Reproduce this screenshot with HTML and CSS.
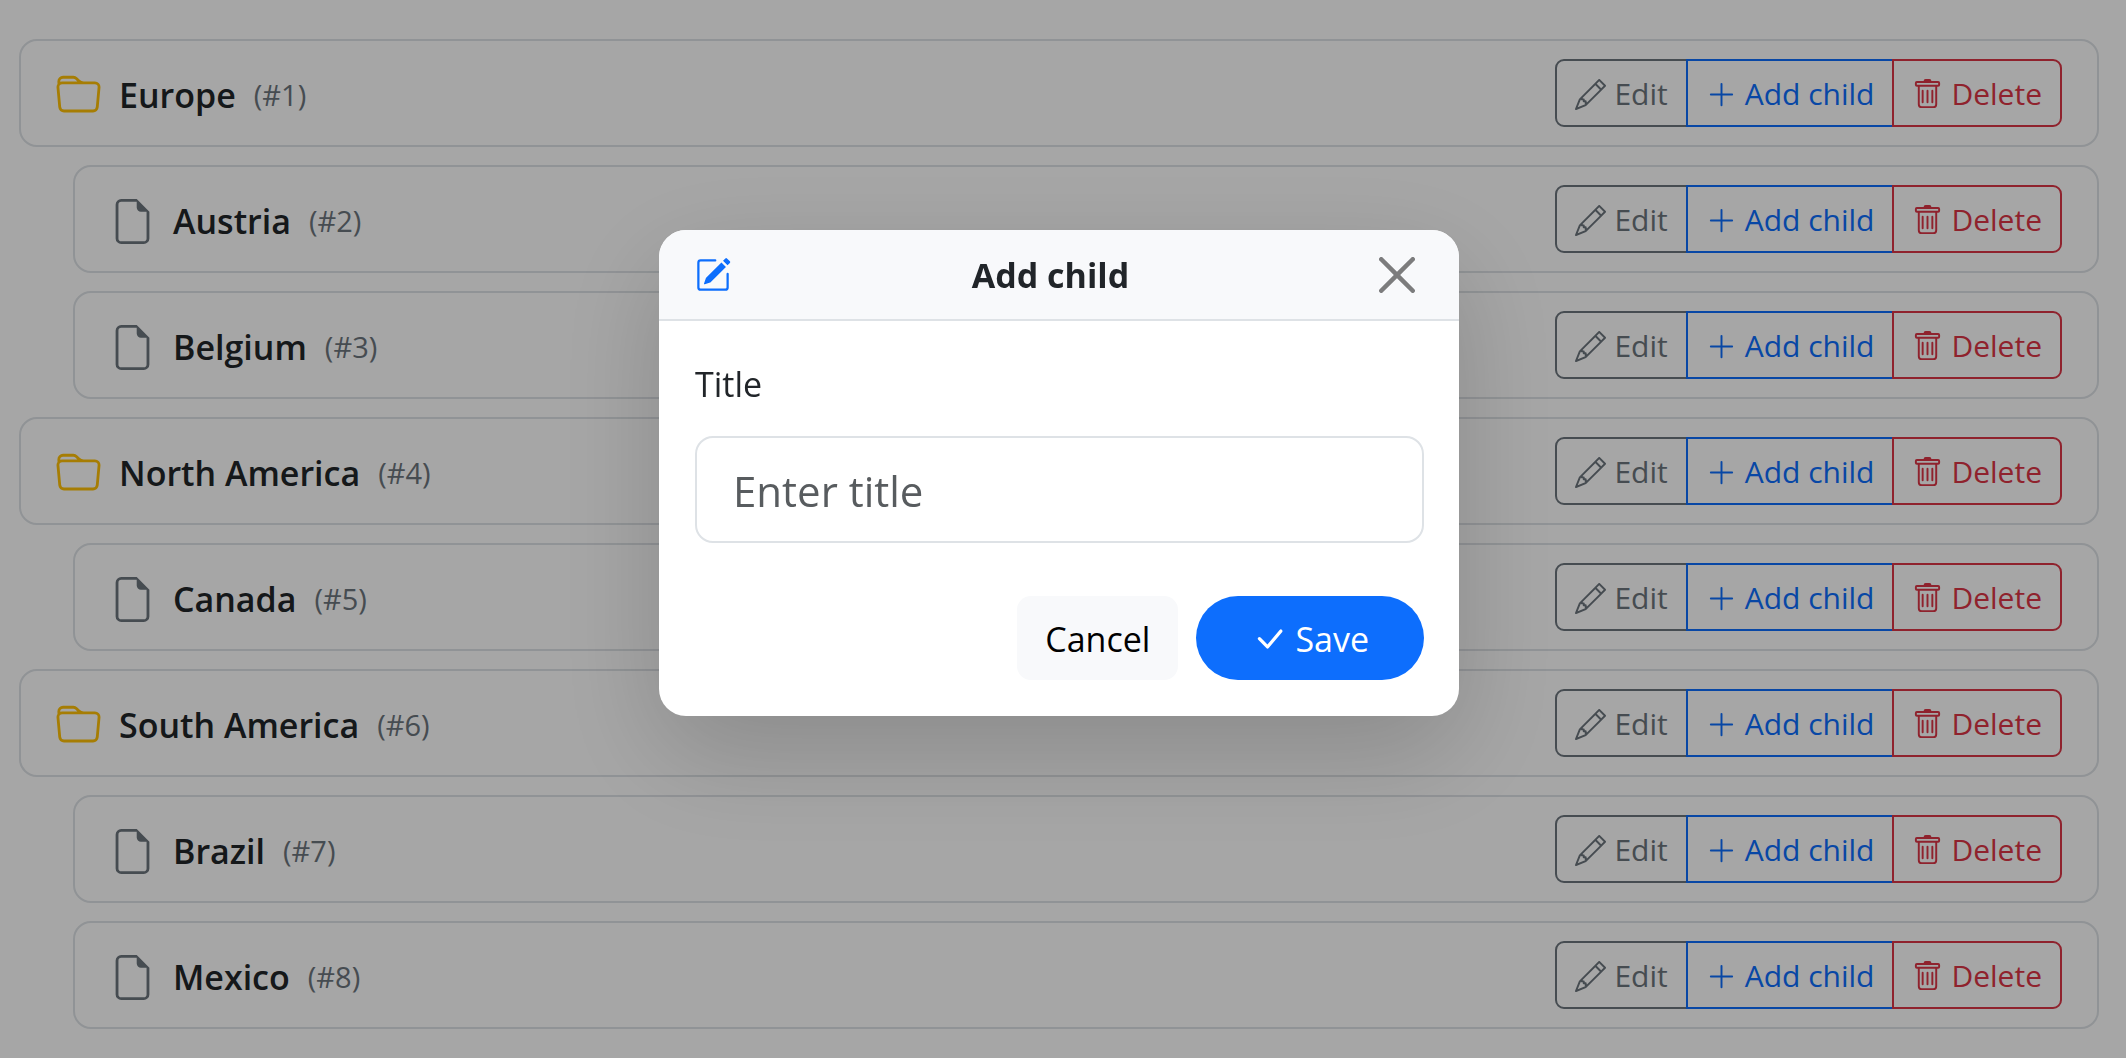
FILE: index.html
```html
<!DOCTYPE html>
<html lang="en">
<head>
<meta charset="utf-8">
<meta name="viewport" content="width=device-width, initial-scale=1">
<title>Regions</title>
<link rel="stylesheet" href="styles.css">
</head>
<body>
<svg class="sprite" aria-hidden="true">
  <symbol id="folder" viewBox="0 0 16 16"><path d="M.54 3.87.5 3a2 2 0 0 1 2-2h3.672a2 2 0 0 1 1.414.586l.828.828A2 2 0 0 0 9.828 3h3.982a2 2 0 0 1 1.992 2.181l-.637 7A2 2 0 0 1 13.174 14H2.826a2 2 0 0 1-1.991-1.819l-.637-7a2 2 0 0 1 .342-1.31zM2.19 4a1 1 0 0 0-.996 1.09l.637 7a1 1 0 0 0 .995.91h10.348a1 1 0 0 0 .995-.91l.637-7A1 1 0 0 0 13.81 4zm4.69-1.707A1 1 0 0 0 6.172 2H2.5a1 1 0 0 0-1 .981l.006.139q.323-.119.684-.12h5.396z"/></symbol>
  <symbol id="file" viewBox="0 0 16 16"><path d="M14 4.5V14a2 2 0 0 1-2 2H4a2 2 0 0 1-2-2V2a2 2 0 0 1 2-2h5.5zm-3 0A1.5 1.5 0 0 1 9.5 3V1H4a1 1 0 0 0-1 1v12a1 1 0 0 0 1 1h8a1 1 0 0 0 1-1V4.5z"/></symbol>
  <symbol id="pencil" viewBox="0 0 16 16"><path d="M12.146.146a.5.5 0 0 1 .708 0l3 3a.5.5 0 0 1 0 .708l-10 10a.5.5 0 0 1-.168.11l-5 2a.5.5 0 0 1-.65-.65l2-5a.5.5 0 0 1 .11-.168zM11.207 2.5 13.5 4.793 14.793 3.5 12.5 1.207zm1.586 3L10.5 3.207 4 9.707V10h.5a.5.5 0 0 1 .5.5v.5h.5a.5.5 0 0 1 .5.5v.5h.293zm-9.761 5.175-.106.106-1.528 3.821 3.821-1.528.106-.106A.5.5 0 0 1 5 12.5V12h-.5a.5.5 0 0 1-.5-.5V11h-.5a.5.5 0 0 1-.468-.325"/></symbol>
  <symbol id="plus" viewBox="0 0 16 16"><path d="M8 2a.5.5 0 0 1 .5.5v5h5a.5.5 0 0 1 0 1h-5v5a.5.5 0 0 1-1 0v-5h-5a.5.5 0 0 1 0-1h5v-5A.5.5 0 0 1 8 2"/></symbol>
  <symbol id="trash" viewBox="0 0 16 16"><path d="M5.5 5.5A.5.5 0 0 1 6 6v6a.5.5 0 0 1-1 0V6a.5.5 0 0 1 .5-.5m2.5 0a.5.5 0 0 1 .5.5v6a.5.5 0 0 1-1 0V6a.5.5 0 0 1 .5-.5m3 .5a.5.5 0 0 0-1 0v6a.5.5 0 0 0 1 0z"/><path d="M14.5 3a1 1 0 0 1-1 1H13v9a2 2 0 0 1-2 2H5a2 2 0 0 1-2-2V4h-.5a1 1 0 0 1-1-1V2a1 1 0 0 1 1-1H6a1 1 0 0 1 1-1h2a1 1 0 0 1 1 1h3.5a1 1 0 0 1 1 1zM4.118 4 4 4.059V13a1 1 0 0 0 1 1h6a1 1 0 0 0 1-1V4.059L11.882 4zM2.5 3h11V2h-11z"/></symbol>
  <symbol id="pencil-square" viewBox="0 0 16 16"><path d="M15.502 1.94a.5.5 0 0 1 0 .706L14.459 3.69l-2-2L13.502.646a.5.5 0 0 1 .707 0l1.293 1.293zm-1.75 2.456-2-2L4.939 9.21a.5.5 0 0 0-.121.196l-.805 2.414a.25.25 0 0 0 .316.316l2.414-.805a.5.5 0 0 0 .196-.12l6.813-6.814z"/><path fill-rule="evenodd" d="M1 13.5A1.5 1.5 0 0 0 2.5 15h11a1.5 1.5 0 0 0 1.5-1.5v-6a.5.5 0 0 0-1 0v6a.5.5 0 0 1-.5.5h-11a.5.5 0 0 1-.5-.5v-11a.5.5 0 0 1 .5-.5H9a.5.5 0 0 0 0-1H2.5A1.5 1.5 0 0 0 1 2.5z"/></symbol>
  <symbol id="close" viewBox="0 0 16 16"><path d="M.293.293a1 1 0 0 1 1.414 0L8 6.586 14.293.293a1 1 0 1 1 1.414 1.414L9.414 8l6.293 6.293a1 1 0 0 1-1.414 1.414L8 9.414l-6.293 6.293a1 1 0 0 1-1.414-1.414L6.586 8 .293 1.707a1 1 0 0 1 0-1.414"/></symbol>
  <symbol id="check" viewBox="0 0 16 16"><path d="M12.736 3.97a.733.733 0 0 1 1.047 0c.286.289.29.756.01 1.05L7.88 12.01a.733.733 0 0 1-1.065.02L3.217 8.384a.757.757 0 0 1 0-1.06.733.733 0 0 1 1.047 0l3.052 3.093 5.4-6.425z"/></symbol>
</svg>

<ul class="tree" id="tree"></ul>

<div class="overlay">
  <form class="modal" role="dialog" aria-modal="true" aria-labelledby="modal-title">
    <header class="modal-header">
      <svg class="icon icon-md icon-primary"><use href="#pencil-square"/></svg>
      <h1 class="modal-title" id="modal-title">Add child</h1>
      <button class="close" type="button" aria-label="Close"><svg class="icon icon-md"><use href="#close"/></svg></button>
    </header>
    <div class="modal-body">
      <label class="label" for="title">Title</label>
      <input class="input" id="title" type="text" placeholder="Enter title">
    </div>
    <footer class="modal-footer">
      <button class="action action-cancel" type="button">Cancel</button>
      <button class="action action-save" type="submit"><svg class="icon icon-md"><use href="#check"/></svg>Save</button>
    </footer>
  </form>
</div>
<script src="tree.js"></script>
</body>
</html>
```
FILE: tree.js
```js
const regions = [
  { id: 1, title: "Europe", children: [{ id: 2, title: "Austria" }, { id: 3, title: "Belgium" }] },
  { id: 4, title: "North America", children: [{ id: 5, title: "Canada" }] },
  { id: 6, title: "South America", children: [{ id: 7, title: "Brazil" }, { id: 8, title: "Mexico" }] }
];

const icon = (name, cls) => `<svg class="icon ${cls}" aria-hidden="true"><use href="#${name}"/></svg>`;

const renderNode = (node) => `
  <li class="node">
    <div class="row">
      ${node.children ? icon("folder", "icon-lg icon-folder") : icon("file", "icon-lg icon-file")}
      <span class="name">${node.title}</span>
      <span class="id">(#${node.id})</span>
      <div class="group" role="group">
        <button class="btn btn-edit" type="button">${icon("pencil", "icon-sm")}Edit</button>
        <button class="btn btn-add" type="button">${icon("plus", "icon-sm")}Add child</button>
        <button class="btn btn-delete" type="button">${icon("trash", "icon-sm")}Delete</button>
      </div>
    </div>
    ${node.children ? `<ul class="tree tree-nested">${node.children.map(renderNode).join("")}</ul>` : ""}
  </li>`;

document.getElementById("tree").innerHTML = regions.map(renderNode).join("");
```
FILE: styles.css
```css
* {
  box-sizing: border-box;
}

body {
  margin: 0;
  padding: 39px 27px 27px 19px;
  background: #fff;
  color: #212529;
  font-family: "Segoe UI", "Open Sans", "Noto Sans", sans-serif;
  font-size: 34px;
  line-height: 54px;
}

button,
input {
  margin: 0;
  font: inherit;
}

.sprite {
  display: none;
}

.icon {
  flex: none;
  display: block;
  fill: currentColor;
}

.icon-sm {
  width: 31px;
  height: 31px;
}

.icon-md {
  width: 36px;
  height: 36px;
}

.icon-lg {
  width: 45px;
  height: 45px;
  margin-top: 4px;
}

.icon-primary {
  color: #0d6efd;
}

.icon-folder {
  color: #ffc107;
}

.icon-file {
  color: #6c757d;
}

/* Tree */

.tree {
  display: flex;
  flex-direction: column;
  gap: 18px;
  margin: 0;
  padding: 0;
  list-style: none;
}

.tree-nested {
  margin-top: 18px;
  padding-left: 54px;
}

.row {
  display: flex;
  align-items: center;
  gap: 18px;
  padding: 18px 35px;
  border: 2px solid #dee2e6;
  border-radius: 18px;
}

.name,
.id {
  padding-top: 3px;
}

.name {
  font-weight: 600;
}

.id {
  color: #6c757d;
  font-size: 29px;
}

.group {
  display: flex;
  margin-left: auto;
}

.btn {
  display: flex;
  align-items: center;
  gap: 8px;
  padding: 9px 18px 7px;
  border: 2px solid;
  background: transparent;
  font-size: 30px;
  line-height: 48px;
}

.btn + .btn {
  margin-left: -2px;
}

.btn:first-child {
  border-radius: 9px 0 0 9px;
}

.btn:last-child {
  border-radius: 0 9px 9px 0;
}

.btn-edit {
  color: #6c757d;
}

.btn-add {
  color: #0d6efd;
}

.btn-delete {
  color: #dc3545;
}

/* Modal */

.overlay {
  position: fixed;
  inset: 0;
  display: flex;
  justify-content: center;
  align-items: flex-start;
  padding: 230px 27px 27px 19px;
  background: rgba(0, 0, 0, 0.35);
}

.modal {
  width: 100%;
  max-width: 800px;
  overflow: hidden;
  border-radius: 27px;
  background: #fff;
  box-shadow: 0 36px 108px rgba(0, 0, 0, 0.175);
}

.modal-header {
  display: flex;
  justify-content: space-between;
  align-items: center;
  padding: 18px 35px 17px 36px;
  border-bottom: 2px solid #dee2e6;
  background: #f8f9fb;
}

.modal-title {
  margin: 0;
  font-size: 34px;
  font-weight: 700;
}

.close {
  padding: 9px;
  border: 0;
  background: transparent;
  color: #000;
  opacity: 0.5;
}

.modal-body {
  display: flex;
  flex-direction: column;
  gap: 25px;
  padding: 36px 35px 36px 36px;
}

.input {
  width: 100%;
  padding: 19px 36px 17px;
  border: 2px solid #dee2e6;
  border-radius: 18px;
  background: #fff;
  color: #212529;
  font-size: 42px;
  line-height: 67px;
}

.input::placeholder {
  color: #585c5f;
  opacity: 1;
}

.modal-footer {
  display: flex;
  justify-content: flex-end;
  gap: 18px;
  padding: 17px 35px 36px 36px;
}

.action {
  display: flex;
  align-items: center;
  gap: 8px;
  padding: 16px 28px 14px;
  border: 0;
  border-radius: 14px;
}

.action-cancel {
  background: #f8f9fb;
  color: #000;
}

.action-save {
  padding: 16px 55px 14px;
  border-radius: 42px;
  background: #0d6efd;
  color: #fff;
}
```
